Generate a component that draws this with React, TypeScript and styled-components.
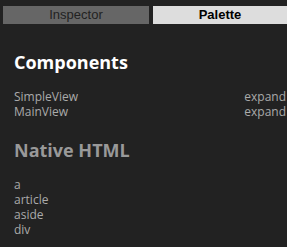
import React from 'react';
import styled, { createGlobalStyle } from 'styled-components';

const GlobalStyle = createGlobalStyle`
  html, body {
    margin: 0;
    padding: 0;
    background: #222;
    width: 287px;
    height: 247px;
    overflow: hidden;
  }
`;

const Shell = styled.div`
  display: flex;
  flex-direction: column;
  font-family: 'Open Sans', sans-serif;
`;

const TabBar = styled.div`
  display: flex;
  gap: 4px;
  padding: 6px 0 0 3px;
`;

const Tab = styled.div<{ $active?: boolean }>`
  flex: ${p => (p.$active ? '1' : '0 0 146px')};
  height: 18px;
  line-height: 18px;
  text-align: center;
  font-family: 'Liberation Sans', Arial, sans-serif;
  font-size: 13px;
  font-weight: ${p => (p.$active ? 700 : 400)};
  background: ${p => (p.$active ? '#ddd' : '#666')};
  color: ${p => (p.$active ? '#000' : '#222')};
`;

const Section = styled.section<{ $gap: number }>`
  display: flex;
  flex-direction: column;
  margin-top: ${p => p.$gap}px;
  padding: 0 1px 0 14px;
`;

const Heading = styled.h2<{ $muted?: boolean }>`
  margin: 0;
  font-size: 18px;
  font-weight: 700;
  line-height: 24px;
  color: ${p => (p.$muted ? '#999' : '#fff')};
`;

const List = styled.div<{ $gap: number }>`
  display: flex;
  flex-direction: column;
  margin-top: ${p => p.$gap}px;
`;

const Row = styled.div`
  display: flex;
  justify-content: space-between;
  font-size: 12px;
  line-height: 15px;
  color: #aaa;
`;

const components = ['SimpleView', 'MainView'];
const nativeTags = ['a', 'article', 'aside', 'div'];

export default function App() {
  return (
    <>
      <GlobalStyle />
      <Shell>
        <TabBar>
          <Tab>Inspector</Tab>
          <Tab $active>Palette</Tab>
        </TabBar>
        <Section $gap={26}>
          <Heading>Components</Heading>
          <List $gap={15}>
            {components.map(name => (
              <Row key={name}>
                <span>{name}</span>
                <span>expand</span>
              </Row>
            ))}
          </List>
        </Section>
        <Section $gap={19}>
          <Heading $muted>Native HTML</Heading>
          <List $gap={15}>
            {nativeTags.map(tag => (
              <Row key={tag}>
                <span>{tag}</span>
              </Row>
            ))}
          </List>
        </Section>
      </Shell>
    </>
  );
}
